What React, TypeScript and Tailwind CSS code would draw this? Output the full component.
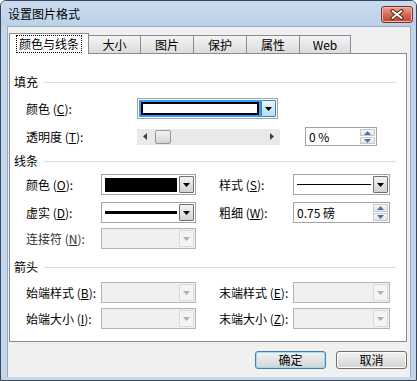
import React from "react";

const Mn = ({ text, k }: { text: string; k: string }) => (
  <span className="whitespace-nowrap">
    {text} (<span className="underline">{k}</span>):
  </span>
);

const Arrow = ({ color = "#000" }: { color?: string }) => (
  <svg width="7" height="4" viewBox="0 0 7 4">
    <path d="M0 0h7L3.5 4z" fill={color} />
  </svg>
);

const DropBtn = ({ kind = "normal" }: { kind?: "normal" | "hot" | "disabled" }) => {
  const cls =
    kind === "hot"
      ? "border-[#3c7fb1] bg-linear-to-b from-[#eaf6fd] to-[#b2dff7]"
      : kind === "disabled"
      ? "border-[#dadada] bg-[#f4f4f4]"
      : "border-[#707070] bg-linear-to-b from-[#f4f4f4] to-[#d2d2d2]";
  return (
    <div className={`w-[15px] h-full flex items-center justify-center border rounded-[1px] ${cls}`}>
      <Arrow color={kind === "disabled" ? "#b0b0b0" : "#000"} />
    </div>
  );
};

const Combo = ({ w, children }: { w: string; children?: React.ReactNode }) => (
  <div className={`${w} h-[21px] border border-[#a3a3a3] bg-white flex p-px`}>
    <div className="flex-1 flex items-center pl-[2px] pr-[2px]">{children}</div>
    <DropBtn />
  </div>
);

const Disabled = ({ w }: { w: string }) => (
  <div className={`${w} h-[21px] border border-[#b4b4b4] bg-[#f0f0f0] flex p-px`}>
    <div className="flex-1" />
    <DropBtn kind="disabled" />
  </div>
);

const SpinBtns = () => (
  <div className="w-[15px] h-full flex flex-col gap-px py-px">
    <div className="flex-1 flex items-center justify-center border border-[#c9c9c9] bg-linear-to-b from-[#f7f7f7] to-[#e4e4e4]">
      <svg width="7" height="4" viewBox="0 0 7 4">
        <path d="M0 4h7L3.5 0z" fill="#4d6fb5" />
      </svg>
    </div>
    <div className="flex-1 flex items-center justify-center border border-[#c9c9c9] bg-linear-to-b from-[#f7f7f7] to-[#e4e4e4]">
      <svg width="7" height="4" viewBox="0 0 7 4">
        <path d="M0 0h7L3.5 4z" fill="#4d6fb5" />
      </svg>
    </div>
  </div>
);

const Section = ({ title }: { title: string }) => (
  <div className="h-[16px] flex items-center pl-[4px] pr-[10px]">
    <span>{title}</span>
    <div className="flex-1 h-px bg-[#d5dfe5] ml-[6px]" />
  </div>
);

const tabs = [
  { label: "大小", w: "w-[53px]" },
  { label: "图片", w: "w-[54px]" },
  { label: "保护", w: "w-[54px]" },
  { label: "属性", w: "w-[54px]" },
  { label: "Web", w: "w-[52px]" },
];

export default function App() {
  return (
    <div className="w-[417px] h-[381px] flex flex-col bg-[#c2d6ec] border border-[#3a4656] rounded-t-[6px] text-[12px] leading-none text-black font-['Noto_Sans_CJK_SC',sans-serif] overflow-hidden">
      {/* Title bar */}
      <div className="h-[25px] shrink-0 flex items-center justify-between pl-[7px] pr-[3px] bg-linear-to-b from-[#c9dbef] to-[#bcd2ea]">
        <span className="text-[12px] mt-px">设置图片格式</span>
        <div className="w-[32px] h-[17px] mt-[2px] rounded-[3px] border border-[#7a3127] bg-linear-to-b from-[#e8a597] via-[#d46a56] to-[#c2412c] flex items-center justify-center shadow-[inset_0_0_0_1px_#efb6aa]">
          <svg width="14" height="11" viewBox="0 0 14 11">
            <path d="M2.5 2l9 7M11.5 2l-9 7" stroke="#5a1f16" strokeWidth="4" strokeLinecap="round" />
            <path d="M2.5 2l9 7M11.5 2l-9 7" stroke="#fff" strokeWidth="2" strokeLinecap="round" />
          </svg>
        </div>
      </div>

      {/* Body */}
      <div className="flex-1 ml-[6px] mr-[5px] mb-[3px] bg-[#f0f0f0] border-l border-t border-r border-[#98aac0] flex flex-col">
        {/* Tabs */}
        <div className="h-[20px] mt-[6px] ml-[1px] flex items-end">
          <div className="relative z-10 w-[80px] h-[21px] -mb-px border border-b-0 border-[#898c95] bg-white flex items-center justify-center">
            <span className="px-[2px] py-[2px] outline-1 outline-dotted outline-black">颜色与线条</span>
          </div>
          {tabs.map((t) => (
            <div
              key={t.label}
              className={`${t.w} h-[18px] -ml-px border border-b-0 border-[#898c95] bg-linear-to-b from-[#f4f4f4] to-[#dcdcdc] flex items-center justify-center`}
            >
              {t.label}
            </div>
          ))}
        </div>

        {/* Panel */}
        <div className="h-[289px] ml-[1px] mr-[3px] border border-[#898c95] bg-white flex flex-col pt-[20px]">
          <Section title="填充" />
          <div className="mt-[8px] h-[21px] flex items-center pl-[16px]">
            <div className="w-[111px]">
              <Mn text="颜色" k="C" />
            </div>
            <div className="w-[141px] h-[21px] border border-[#a3a3a3] bg-white flex p-px">
              <div className="flex-1 bg-[#3399ff] p-[2px] flex">
                <div className="flex-1 border-2 border-black bg-white" />
              </div>
              <DropBtn kind="hot" />
            </div>
          </div>
          <div className="mt-[7px] h-[21px] flex items-center pl-[16px]">
            <div className="w-[111px]">
              <Mn text="透明度" k="T" />
            </div>
            <div className="w-[143px] h-[16px] bg-[#e9e9e9] flex items-center pl-[6px] pr-[6px]">
              <svg width="4" height="7" viewBox="0 0 4 7">
                <path d="M4 0v7L0 3.5z" fill="#404040" />
              </svg>
              <div className="ml-[8px] w-[16px] h-[14px] rounded-[2px] border border-[#979797] bg-linear-to-b from-[#f3f3f3] to-[#d4d4d4]" />
              <div className="flex-1" />
              <svg width="4" height="7" viewBox="0 0 4 7">
                <path d="M0 0v7L4 3.5z" fill="#404040" />
              </svg>
            </div>
            <div className="ml-[25px] w-[72px] h-[19px] border border-[#a3a3a3] bg-white flex items-center pl-[3px] pr-px">
              <span className="flex-1">0 %</span>
              <SpinBtns />
            </div>
          </div>

          <div className="mt-[6px]">
            <Section title="线条" />
          </div>
          <div className="mt-[5px] h-[21px] flex items-center pl-[16px]">
            <div className="w-[75px]">
              <Mn text="颜色" k="O" />
            </div>
            <Combo w="w-[95px]">
              <div className="w-full h-[14px] bg-black" />
            </Combo>
            <div className="w-[23px]" />
            <div className="w-[74px]">
              <Mn text="样式" k="S" />
            </div>
            <Combo w="w-[97px]">
              <div className="w-full h-px bg-black" />
            </Combo>
          </div>
          <div className="mt-[7px] h-[21px] flex items-center pl-[16px]">
            <div className="w-[75px]">
              <Mn text="虚实" k="D" />
            </div>
            <Combo w="w-[95px]">
              <div className="w-full h-[3px] bg-black" />
            </Combo>
            <div className="w-[23px]" />
            <div className="w-[74px]">
              <Mn text="粗细" k="W" />
            </div>
            <div className="w-[97px] h-[21px] border border-[#a3a3a3] bg-white flex items-center pl-[3px] pr-px">
              <span className="flex-1">0.75 磅</span>
              <SpinBtns />
            </div>
          </div>
          <div className="mt-[5px] h-[21px] flex items-center pl-[16px]">
            <div className="w-[75px] text-[#303030]">
              <Mn text="连接符" k="N" />
            </div>
            <Disabled w="w-[95px]" />
          </div>

          <div className="mt-[10px]">
            <Section title="箭头" />
          </div>
          <div className="mt-[7px] h-[21px] flex items-center pl-[16px]">
            <div className="w-[75px]">
              <Mn text="始端样式" k="B" />
            </div>
            <Disabled w="w-[95px]" />
            <div className="w-[23px]" />
            <div className="w-[74px]">
              <Mn text="末端样式" k="E" />
            </div>
            <Disabled w="w-[97px]" />
          </div>
          <div className="mt-[5px] h-[21px] flex items-center pl-[16px]">
            <div className="w-[75px]">
              <Mn text="始端大小" k="I" />
            </div>
            <Disabled w="w-[95px]" />
            <div className="w-[23px]" />
            <div className="w-[74px]">
              <Mn text="末端大小" k="Z" />
            </div>
            <Disabled w="w-[97px]" />
          </div>
        </div>

        {/* Buttons */}
        <div className="mt-[9px] mr-[3px] flex justify-end gap-[10px]">
          <button className="w-[71px] h-[18px] rounded-[3px] border border-[#3c7fb1] bg-linear-to-b from-[#f2f2f2] to-[#d4d4d4] shadow-[inset_0_0_0_1px_#9ddcf8] flex items-center justify-center">
            确定
          </button>
          <button className="w-[71px] h-[18px] rounded-[3px] border border-[#707070] bg-linear-to-b from-[#f2f2f2] to-[#d4d4d4] shadow-[inset_0_0_0_1px_#fcfcfc] flex items-center justify-center">
            取消
          </button>
        </div>
      </div>
    </div>
  );
}
